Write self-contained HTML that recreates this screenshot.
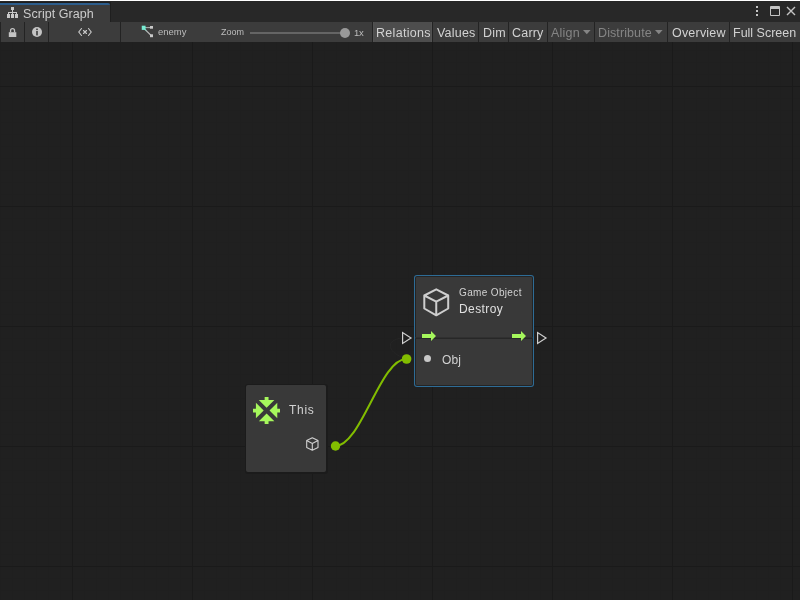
<!DOCTYPE html>
<html><head><meta charset="utf-8">
<style>
html,body{margin:0;padding:0;}
body{width:800px;height:600px;overflow:hidden;position:relative;background:#202020;font-family:"Liberation Sans",sans-serif;}
.abs{position:absolute;}
.t{position:absolute;white-space:nowrap;line-height:1;will-change:transform;}
</style></head><body>
<svg class="abs" style="left:0;top:0" width="800" height="600">
<rect x="0" y="42" width="1" height="558" fill="#1f1f1f"/>
<rect x="12" y="42" width="1" height="558" fill="#1f1f1f"/>
<rect x="24" y="42" width="1" height="558" fill="#1f1f1f"/>
<rect x="36" y="42" width="1" height="558" fill="#1f1f1f"/>
<rect x="48" y="42" width="1" height="558" fill="#1f1f1f"/>
<rect x="60" y="42" width="1" height="558" fill="#1f1f1f"/>
<rect x="84" y="42" width="1" height="558" fill="#1f1f1f"/>
<rect x="96" y="42" width="1" height="558" fill="#1f1f1f"/>
<rect x="108" y="42" width="1" height="558" fill="#1f1f1f"/>
<rect x="120" y="42" width="1" height="558" fill="#1f1f1f"/>
<rect x="132" y="42" width="1" height="558" fill="#1f1f1f"/>
<rect x="144" y="42" width="1" height="558" fill="#1f1f1f"/>
<rect x="156" y="42" width="1" height="558" fill="#1f1f1f"/>
<rect x="168" y="42" width="1" height="558" fill="#1f1f1f"/>
<rect x="180" y="42" width="1" height="558" fill="#1f1f1f"/>
<rect x="204" y="42" width="1" height="558" fill="#1f1f1f"/>
<rect x="216" y="42" width="1" height="558" fill="#1f1f1f"/>
<rect x="228" y="42" width="1" height="558" fill="#1f1f1f"/>
<rect x="240" y="42" width="1" height="558" fill="#1f1f1f"/>
<rect x="252" y="42" width="1" height="558" fill="#1f1f1f"/>
<rect x="264" y="42" width="1" height="558" fill="#1f1f1f"/>
<rect x="276" y="42" width="1" height="558" fill="#1f1f1f"/>
<rect x="288" y="42" width="1" height="558" fill="#1f1f1f"/>
<rect x="300" y="42" width="1" height="558" fill="#1f1f1f"/>
<rect x="324" y="42" width="1" height="558" fill="#1f1f1f"/>
<rect x="336" y="42" width="1" height="558" fill="#1f1f1f"/>
<rect x="348" y="42" width="1" height="558" fill="#1f1f1f"/>
<rect x="360" y="42" width="1" height="558" fill="#1f1f1f"/>
<rect x="372" y="42" width="1" height="558" fill="#1f1f1f"/>
<rect x="384" y="42" width="1" height="558" fill="#1f1f1f"/>
<rect x="396" y="42" width="1" height="558" fill="#1f1f1f"/>
<rect x="408" y="42" width="1" height="558" fill="#1f1f1f"/>
<rect x="420" y="42" width="1" height="558" fill="#1f1f1f"/>
<rect x="444" y="42" width="1" height="558" fill="#1f1f1f"/>
<rect x="456" y="42" width="1" height="558" fill="#1f1f1f"/>
<rect x="468" y="42" width="1" height="558" fill="#1f1f1f"/>
<rect x="480" y="42" width="1" height="558" fill="#1f1f1f"/>
<rect x="492" y="42" width="1" height="558" fill="#1f1f1f"/>
<rect x="504" y="42" width="1" height="558" fill="#1f1f1f"/>
<rect x="516" y="42" width="1" height="558" fill="#1f1f1f"/>
<rect x="528" y="42" width="1" height="558" fill="#1f1f1f"/>
<rect x="540" y="42" width="1" height="558" fill="#1f1f1f"/>
<rect x="564" y="42" width="1" height="558" fill="#1f1f1f"/>
<rect x="576" y="42" width="1" height="558" fill="#1f1f1f"/>
<rect x="588" y="42" width="1" height="558" fill="#1f1f1f"/>
<rect x="600" y="42" width="1" height="558" fill="#1f1f1f"/>
<rect x="612" y="42" width="1" height="558" fill="#1f1f1f"/>
<rect x="624" y="42" width="1" height="558" fill="#1f1f1f"/>
<rect x="636" y="42" width="1" height="558" fill="#1f1f1f"/>
<rect x="648" y="42" width="1" height="558" fill="#1f1f1f"/>
<rect x="660" y="42" width="1" height="558" fill="#1f1f1f"/>
<rect x="684" y="42" width="1" height="558" fill="#1f1f1f"/>
<rect x="696" y="42" width="1" height="558" fill="#1f1f1f"/>
<rect x="708" y="42" width="1" height="558" fill="#1f1f1f"/>
<rect x="720" y="42" width="1" height="558" fill="#1f1f1f"/>
<rect x="732" y="42" width="1" height="558" fill="#1f1f1f"/>
<rect x="744" y="42" width="1" height="558" fill="#1f1f1f"/>
<rect x="756" y="42" width="1" height="558" fill="#1f1f1f"/>
<rect x="768" y="42" width="1" height="558" fill="#1f1f1f"/>
<rect x="780" y="42" width="1" height="558" fill="#1f1f1f"/>
<rect x="0" y="50" width="800" height="1" fill="#1f1f1f"/>
<rect x="0" y="62" width="800" height="1" fill="#1f1f1f"/>
<rect x="0" y="74" width="800" height="1" fill="#1f1f1f"/>
<rect x="0" y="98" width="800" height="1" fill="#1f1f1f"/>
<rect x="0" y="110" width="800" height="1" fill="#1f1f1f"/>
<rect x="0" y="122" width="800" height="1" fill="#1f1f1f"/>
<rect x="0" y="134" width="800" height="1" fill="#1f1f1f"/>
<rect x="0" y="146" width="800" height="1" fill="#1f1f1f"/>
<rect x="0" y="158" width="800" height="1" fill="#1f1f1f"/>
<rect x="0" y="170" width="800" height="1" fill="#1f1f1f"/>
<rect x="0" y="182" width="800" height="1" fill="#1f1f1f"/>
<rect x="0" y="194" width="800" height="1" fill="#1f1f1f"/>
<rect x="0" y="218" width="800" height="1" fill="#1f1f1f"/>
<rect x="0" y="230" width="800" height="1" fill="#1f1f1f"/>
<rect x="0" y="242" width="800" height="1" fill="#1f1f1f"/>
<rect x="0" y="254" width="800" height="1" fill="#1f1f1f"/>
<rect x="0" y="266" width="800" height="1" fill="#1f1f1f"/>
<rect x="0" y="278" width="800" height="1" fill="#1f1f1f"/>
<rect x="0" y="290" width="800" height="1" fill="#1f1f1f"/>
<rect x="0" y="302" width="800" height="1" fill="#1f1f1f"/>
<rect x="0" y="314" width="800" height="1" fill="#1f1f1f"/>
<rect x="0" y="338" width="800" height="1" fill="#1f1f1f"/>
<rect x="0" y="350" width="800" height="1" fill="#1f1f1f"/>
<rect x="0" y="362" width="800" height="1" fill="#1f1f1f"/>
<rect x="0" y="374" width="800" height="1" fill="#1f1f1f"/>
<rect x="0" y="386" width="800" height="1" fill="#1f1f1f"/>
<rect x="0" y="398" width="800" height="1" fill="#1f1f1f"/>
<rect x="0" y="410" width="800" height="1" fill="#1f1f1f"/>
<rect x="0" y="422" width="800" height="1" fill="#1f1f1f"/>
<rect x="0" y="434" width="800" height="1" fill="#1f1f1f"/>
<rect x="0" y="458" width="800" height="1" fill="#1f1f1f"/>
<rect x="0" y="470" width="800" height="1" fill="#1f1f1f"/>
<rect x="0" y="482" width="800" height="1" fill="#1f1f1f"/>
<rect x="0" y="494" width="800" height="1" fill="#1f1f1f"/>
<rect x="0" y="506" width="800" height="1" fill="#1f1f1f"/>
<rect x="0" y="518" width="800" height="1" fill="#1f1f1f"/>
<rect x="0" y="530" width="800" height="1" fill="#1f1f1f"/>
<rect x="0" y="542" width="800" height="1" fill="#1f1f1f"/>
<rect x="0" y="554" width="800" height="1" fill="#1f1f1f"/>
<rect x="0" y="578" width="800" height="1" fill="#1f1f1f"/>
<rect x="0" y="590" width="800" height="1" fill="#1f1f1f"/>
<rect x="72" y="42" width="1" height="558" fill="#1a1a1a"/>
<rect x="192" y="42" width="1" height="558" fill="#1a1a1a"/>
<rect x="312" y="42" width="1" height="558" fill="#1a1a1a"/>
<rect x="432" y="42" width="1" height="558" fill="#1a1a1a"/>
<rect x="552" y="42" width="1" height="558" fill="#1a1a1a"/>
<rect x="672" y="42" width="1" height="558" fill="#1a1a1a"/>
<rect x="792" y="42" width="1" height="558" fill="#1a1a1a"/>
<rect x="0" y="86" width="800" height="1" fill="#1a1a1a"/>
<rect x="0" y="206" width="800" height="1" fill="#1a1a1a"/>
<rect x="0" y="326" width="800" height="1" fill="#1a1a1a"/>
<rect x="0" y="446" width="800" height="1" fill="#1a1a1a"/>
<rect x="0" y="566" width="800" height="1" fill="#1a1a1a"/>
</svg>
<!-- top rows -->
<div class="abs" style="left:0;top:0;width:800px;height:1px;background:#ffffff"></div>
<div class="abs" style="left:0;top:1px;width:800px;height:1px;background:#262626"></div>
<div class="abs" style="left:0;top:2px;width:800px;height:20px;background:#282828"></div>
<!-- tab -->
<div class="abs" style="left:0;top:2px;width:110px;height:1px;background:#1e1e1e"></div>
<div class="abs" style="left:0;top:3px;width:110px;height:2px;background:#2c5d8c;border-top-right-radius:2px"></div>
<div class="abs" style="left:0;top:5px;width:110px;height:17px;background:#3c3c3c"></div>
<div class="abs" style="left:110px;top:2px;width:1px;height:20px;background:#1f1f1f"></div>
<svg class="abs" style="left:7px;top:7px" width="11" height="11" viewBox="0 0 11 11">
 <g fill="#c8c8c8">
 <rect x="4" y="0" width="3" height="3"/>
 <rect x="5" y="3" width="1" height="2"/>
 <rect x="1" y="5" width="9" height="1"/>
 <rect x="1" y="5" width="1" height="3"/><rect x="5" y="5" width="1" height="3"/><rect x="9" y="5" width="1" height="3"/>
 <rect x="0" y="7" width="3" height="4"/><rect x="4" y="7" width="3" height="4"/><rect x="8" y="7" width="3" height="4"/>
 </g>
</svg>
<div class="t" style="left:23px;top:8px;font-size:12.5px;letter-spacing:0.05px;color:#cccccc">Script Graph</div>
<!-- window icons -->
<div class="abs" style="left:756px;top:6px;width:2px;height:2px;background:#c4c4c4"></div>
<div class="abs" style="left:756px;top:10px;width:2px;height:2px;background:#c4c4c4"></div>
<div class="abs" style="left:756px;top:14px;width:2px;height:2px;background:#c4c4c4"></div>
<div class="abs" style="left:770px;top:6px;width:8px;height:6px;border:1px solid #c4c4c4;border-top-width:3px;border-radius:1px"></div>
<svg class="abs" style="left:786px;top:6px" width="10" height="10" viewBox="0 0 10 10">
 <path d="M1 1L9 9M9 1L1 9" stroke="#c4c4c4" stroke-width="1.4"/>
</svg>
<!-- toolbar -->
<div class="abs" style="left:0;top:22px;width:800px;height:20px;background:#3c3c3c"></div>
<div class="abs" style="left:0;top:22px;width:1px;height:20px;background:#232323"></div>
<div class="abs" style="left:24px;top:22px;width:1px;height:20px;background:#232323"></div>
<div class="abs" style="left:48px;top:22px;width:1px;height:20px;background:#232323"></div>
<div class="abs" style="left:120px;top:22px;width:1px;height:20px;background:#232323"></div>
<div class="abs" style="left:372px;top:22px;width:1px;height:20px;background:#232323"></div>
<div class="abs" style="left:373px;top:22px;width:59px;height:20px;background:#4d4d4d"></div>
<div class="abs" style="left:373px;top:22px;width:1px;height:20px;background:#525252"></div>
<div class="abs" style="left:431px;top:22px;width:1px;height:20px;background:#535353"></div>
<div class="abs" style="left:432px;top:22px;width:1px;height:20px;background:#232323"></div>
<div class="abs" style="left:478px;top:22px;width:1px;height:20px;background:#232323"></div>
<div class="abs" style="left:508px;top:22px;width:1px;height:20px;background:#232323"></div>
<div class="abs" style="left:547px;top:22px;width:1px;height:20px;background:#232323"></div>
<div class="abs" style="left:594px;top:22px;width:1px;height:20px;background:#232323"></div>
<div class="abs" style="left:667px;top:22px;width:1px;height:20px;background:#232323"></div>
<div class="abs" style="left:729px;top:22px;width:1px;height:20px;background:#232323"></div>
<!-- lock -->
<svg class="abs" style="left:8px;top:27px" width="10" height="11" viewBox="0 0 10 11">
 <path d="M2.55 5.3V3.7a2 2 0 0 1 4 0V5.3" fill="none" stroke="#c4c4c4" stroke-width="1.3"/>
 <rect x="0.8" y="5.2" width="7.5" height="4.8" fill="#c4c4c4"/>
</svg>
<!-- info -->
<svg class="abs" style="left:32px;top:27px" width="10" height="10" viewBox="0 0 10 10">
 <circle cx="5" cy="5" r="5" fill="#c4c4c4"/>
 <rect x="4.2" y="1.6" width="1.6" height="1.5" fill="#3c3c3c"/>
 <rect x="4.2" y="4" width="1.6" height="4.4" fill="#3c3c3c"/>
</svg>
<!-- <x> -->
<svg class="abs" style="left:78px;top:27px" width="14" height="10" viewBox="0 0 14 10">
 <path d="M3.5 1.5L0.8 5L3.5 8.5M10.5 1.5L13.2 5L10.5 8.5M5.5 3.5L8.5 6.5M8.5 3.5L5.5 6.5" fill="none" stroke="#c8c8c8" stroke-width="1.15" stroke-linecap="round"/>
</svg>
<!-- graph icon -->
<svg class="abs" style="left:141px;top:25px" width="13" height="13" viewBox="0 0 13 13">
 <defs><linearGradient id="gd" x1="0" y1="0" x2="1" y2="1"><stop offset="0" stop-color="#7ae8cf"/><stop offset="0.45" stop-color="#b8b8b8"/><stop offset="1" stop-color="#c4c4c4"/></linearGradient>
 <linearGradient id="gh" x1="0" y1="0" x2="1" y2="0"><stop offset="0" stop-color="#7ae8cf"/><stop offset="0.45" stop-color="#b8b8b8"/><stop offset="1" stop-color="#c4c4c4"/></linearGradient></defs>
 <rect x="3" y="2.2" width="7" height="0.9" fill="url(#gh)"/>
 <path d="M3 3.5L10.3 10.6" stroke="url(#gd)" stroke-width="1.2"/>
 <rect x="0.75" y="0.7" width="3.8" height="4.2" fill="#78ecd3"/>
 <rect x="9" y="1" width="3" height="2.7" fill="#c8c8c8"/>
 <rect x="9" y="9.3" width="3" height="2.9" fill="#c8c8c8"/>
</svg>
<div class="t" style="left:158px;top:27px;font-size:9.5px;color:#bdbdbd">enemy</div>
<div class="t" style="left:221px;top:28px;font-size:9px;color:#bdbdbd">Zoom</div>
<div class="abs" style="left:250px;top:32px;width:94px;height:2px;background:#656565"></div>
<div class="abs" style="left:340px;top:28px;width:10px;height:10px;border-radius:50%;background:#999999"></div>
<div class="t" style="left:354px;top:27.5px;font-size:9.5px;letter-spacing:-0.4px;color:#bdbdbd">1x</div>
<div class="t" style="left:376.3px;top:27px;font-size:12.5px;letter-spacing:0.3px;color:#d2d2d2">Relations</div>
<div class="t" style="left:437px;top:27px;font-size:12.5px;letter-spacing:0.2px;color:#d2d2d2">Values</div>
<div class="t" style="left:483px;top:27px;font-size:12.5px;letter-spacing:0.2px;color:#d2d2d2">Dim</div>
<div class="t" style="left:512px;top:27px;font-size:12.5px;letter-spacing:0.2px;color:#d2d2d2">Carry</div>
<div class="t" style="left:551px;top:27px;font-size:12.5px;letter-spacing:0.2px;color:#858585">Align</div>
<svg class="abs" style="left:582.5px;top:30px" width="8" height="5" viewBox="0 0 8 5"><path d="M0 0H7.6L3.8 4.3Z" fill="#858585"/></svg>
<div class="t" style="left:598px;top:27px;font-size:12.5px;letter-spacing:0.1px;color:#858585">Distribute</div>
<svg class="abs" style="left:655px;top:30px" width="8" height="5" viewBox="0 0 8 5"><path d="M0 0H7.6L3.8 4.3Z" fill="#858585"/></svg>
<div class="t" style="left:672px;top:27px;font-size:12.5px;letter-spacing:0.2px;color:#d2d2d2">Overview</div>
<div class="t" style="left:733px;top:27px;font-size:12.5px;letter-spacing:0px;color:#d2d2d2">Full Screen</div>

<!-- faint preview curve -->
<svg class="abs" style="left:0;top:0" width="800" height="600">
 <path d="M402 338 C385 340, 388 352, 402 357" fill="none" stroke="#262626" stroke-width="1"/>
 <path d="M335.2 446 C361.2 446, 380.2 359, 406.2 359" fill="none" stroke="#82bd00" stroke-width="2"/>
 <circle cx="335.5" cy="446" r="4.7" fill="#82bd00"/>
 <circle cx="406.6" cy="359" r="4.8" fill="#82bd00"/>
</svg>

<!-- This node -->
<div class="abs" style="left:245px;top:384px;width:83px;height:90px;border-radius:3px;background:#1b1b1b"></div>
<div class="abs" style="left:246px;top:385px;width:80px;height:87px;border-radius:2px;background:#393939"></div>
<svg class="abs" style="left:252.8px;top:396.8px" width="27.2" height="27.2" viewBox="0 0 28 28">
 <g fill="#a6f75c">
  <path d="M12 0H16V3H22L14 11L6 3H12Z"/>
  <path d="M12 28H16V25H22L14 17L6 25H12Z"/>
  <path d="M0 12V16H3V22L11 14L3 6V12Z"/>
  <path d="M28 12V16H25V22L17 14L25 6V12Z"/>
 </g>
</svg>
<div class="t" style="left:289px;top:404px;font-size:12px;letter-spacing:0.7px;color:#d2d2d2">This</div>
<svg class="abs" style="left:305px;top:436px" width="16" height="16" viewBox="0 0 16 16">
 <path d="M7.3 1.7L13 4.5V11.6L7.3 14.3L1.7 11.6V4.5Z M1.7 4.5L7.3 7.4L13 4.5 M7.3 7.4V14.3" fill="none" stroke="#d0d0d0" stroke-width="1.1" stroke-linejoin="round"/>
</svg>

<!-- Destroy node -->
<div class="abs" style="left:414px;top:275px;width:120px;height:112px;border-radius:3px;background:#2e6c96"></div>
<div class="abs" style="left:415px;top:276px;width:118px;height:110px;border-radius:2px;background:#242424"></div>
<div class="abs" style="left:416px;top:277px;width:116px;height:108px;border-radius:1px;background:#393939"></div>
<div class="abs" style="left:415px;top:337px;width:118px;height:1px;background:#303030"></div>
<div class="abs" style="left:415px;top:338px;width:118px;height:1px;background:#272727"></div>
<svg class="abs" style="left:421px;top:287px" width="30" height="31" viewBox="0 0 30 31">
 <path d="M15.25 2.3L27.2 8.5V21.5L15.25 28.3L3.3 21.5V8.5Z M3.3 8.5L15.25 14.7L27.2 8.5 M15.25 14.7V28.3" fill="none" stroke="#cecece" stroke-width="2" stroke-linejoin="round"/>
</svg>
<div class="t" style="left:459px;top:288px;font-size:10px;letter-spacing:0.35px;color:#d2d2d2">Game Object</div>
<div class="t" style="left:459px;top:303px;font-size:12px;letter-spacing:0.4px;color:#e0e0e0">Destroy</div>
<svg class="abs" style="left:401px;top:331px" width="12" height="14" viewBox="0 0 12 14">
 <path d="M1.6 1.6V12.4L10 7Z" fill="none" stroke="#d0d0d0" stroke-width="1.2" stroke-linejoin="miter"/>
</svg>
<svg class="abs" style="left:536px;top:331px" width="12" height="14" viewBox="0 0 12 14">
 <path d="M1.6 1.6V12.4L10 7Z" fill="none" stroke="#d0d0d0" stroke-width="1.2" stroke-linejoin="miter"/>
</svg>
<svg class="abs" style="left:422px;top:331px" width="15" height="10" viewBox="0 0 15 10">
 <path d="M0 3H9V0L14 5L9 10V7H0Z" fill="#a6f75c"/>
</svg>
<svg class="abs" style="left:512px;top:331px" width="15" height="10" viewBox="0 0 15 10">
 <path d="M0 3H9V0L14 5L9 10V7H0Z" fill="#a6f75c"/>
</svg>
<div class="abs" style="left:424px;top:355px;width:7px;height:7px;border-radius:50%;background:#c8c8c8"></div>
<div class="t" style="left:442.3px;top:354px;font-size:12px;letter-spacing:0.1px;color:#d2d2d2">Obj</div>
</body></html>
